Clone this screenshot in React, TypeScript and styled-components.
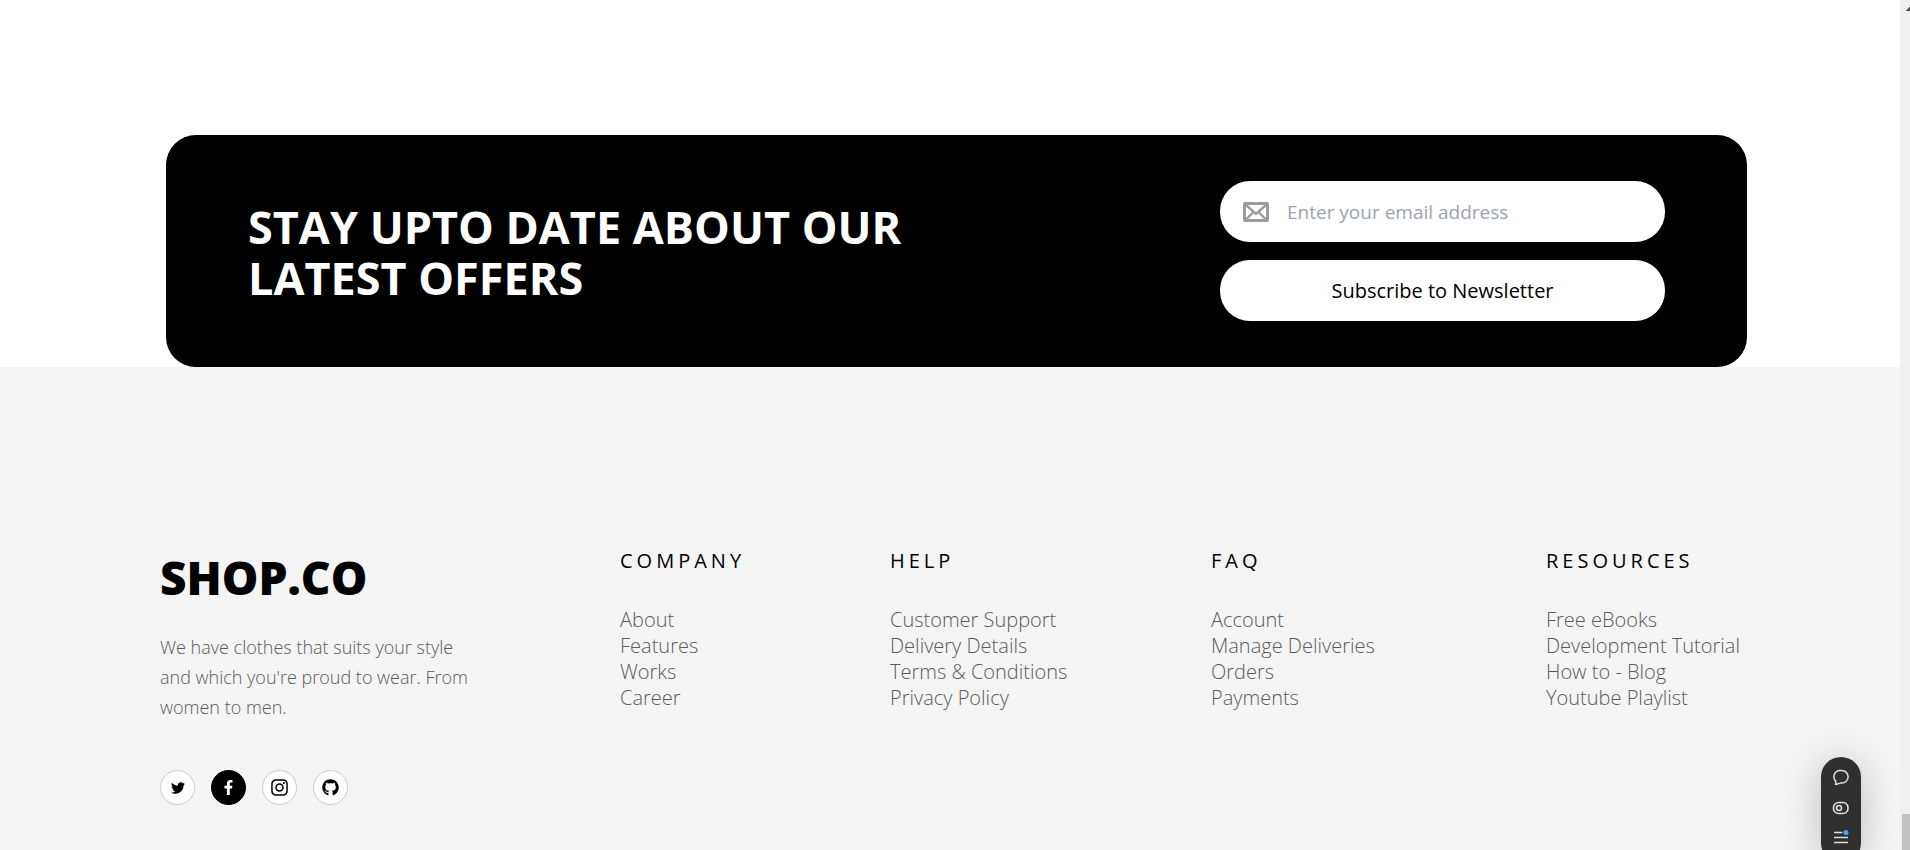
import React from "react";
import styled, { createGlobalStyle } from "styled-components";
import { FaFacebookF, FaGithub, FaInstagram, FaTwitter } from "react-icons/fa";

const GlobalStyle = createGlobalStyle`
  *, *::before, *::after { box-sizing: border-box; }
  body {
    margin: 0;
    background: #fff;
    color: #000;
    font-family: "Segoe UI", "Open Sans", "Noto Sans", sans-serif;
  }
  h1, h2, h3, p, ul { margin: 0; padding: 0; }
`;

const Page = styled.div`
  display: flex;
  min-height: 100vh;
`;

const Main = styled.div`
  flex: 1;
  min-width: 0;
  display: flex;
  flex-direction: column;
`;

const Newsletter = styled.section`
  display: flex;
  align-items: center;
  justify-content: space-between;
  gap: 48px;
  margin: 135px 153px 0 166px;
  padding: 46px 82px;
  border-radius: 30px;
  background: #000;
`;

const Headline = styled.h2`
  max-width: 700px;
  padding-top: 2px;
  color: #fff;
  font-size: 45px;
  font-weight: 700;
  line-height: 51px;
`;

const Form = styled.form`
  display: flex;
  flex-direction: column;
  gap: 18px;
  width: 445px;
`;

const EmailField = styled.label`
  display: flex;
  align-items: center;
  gap: 18px;
  height: 61px;
  padding: 0 23px;
  border-radius: 30px;
  background: #fff;
`;

const EmailInput = styled.input`
  flex: 1;
  min-width: 0;
  padding: 0;
  border: 0;
  outline: 0;
  background: transparent;
  font: inherit;
  font-size: 19px;
  &::placeholder { color: #9ca3af; opacity: 1; }
`;

const SubscribeButton = styled.button`
  height: 61px;
  border: 0;
  border-radius: 30px;
  background: #fff;
  color: #000;
  font: inherit;
  font-size: 20px;
  font-weight: 500;
  cursor: pointer;
`;

const Footer = styled.footer`
  flex: 1;
  display: grid;
  grid-template-columns: 460fr 270fr 321fr 335fr 204fr;
  align-items: start;
  padding: 179px 150px 44px 160px;
  background: #f4f4f4;
`;

const Brand = styled.div`
  padding-top: 3px;
`;

const Logo = styled.h1`
  font-size: 46px;
  font-weight: 800;
  line-height: 56px;
`;

const About = styled.p`
  max-width: 320px;
  margin-top: 27px;
  color: #5c5c5c;
  font-size: 18px;
  font-weight: 300;
  line-height: 30px;
`;

const Socials = styled.div`
  display: flex;
  gap: 16px;
  margin-top: 48px;
`;

const SocialLink = styled.a<{ $active?: boolean }>`
  display: flex;
  align-items: center;
  justify-content: center;
  width: 35px;
  height: 35px;
  border: 1px solid ${(p) => (p.$active ? "#000" : "#ccc")};
  border-radius: 50%;
  background: ${(p) => (p.$active ? "#000" : "#fff")};
  color: ${(p) => (p.$active ? "#fff" : "#000")};
`;

const ColumnTitle = styled.h3`
  font-size: 20px;
  font-weight: 500;
  line-height: 30px;
  letter-spacing: 4px;
`;

const LinkList = styled.ul`
  margin-top: 31px;
  list-style: none;
`;

const FooterLink = styled.a`
  display: block;
  color: #5c5c5c;
  font-size: 20px;
  font-weight: 300;
  line-height: 26px;
  text-decoration: none;
  white-space: nowrap;
`;

const ScrollTrack = styled.div`
  display: flex;
  flex-direction: column;
  justify-content: space-between;
  align-items: flex-end;
  width: 10px;
  padding-top: 7px;
  background: #f0f0f0;
`;

const ScrollThumb = styled.div`
  width: 8px;
  height: 36px;
  background: #c1c1c1;
`;

const Toolbar = styled.div`
  position: fixed;
  right: 49px;
  bottom: -13px;
  display: flex;
  flex-direction: column;
  align-items: center;
  gap: 14px;
  width: 40px;
  height: 106px;
  padding-top: 12px;
  border-radius: 20px;
  background: #303030;
  box-shadow: 0 4px 40px rgba(0, 0, 0, 0.22);
`;

const ToolButton = styled.button`
  display: flex;
  padding: 0;
  border: 0;
  background: transparent;
  color: #ddd;
`;

const columns = [
  { title: "COMPANY", links: ["About", "Features", "Works", "Career"] },
  { title: "HELP", links: ["Customer Support", "Delivery Details", "Terms & Conditions", "Privacy Policy"] },
  { title: "FAQ", links: ["Account", "Manage Deliveries", "Orders", "Payments"] },
  { title: "RESOURCES", links: ["Free eBooks", "Development Tutorial", "How to - Blog", "Youtube Playlist"] },
];

const socials = [
  { name: "Twitter", icon: <FaTwitter size={14} /> },
  { name: "Facebook", icon: <FaFacebookF size={15} />, active: true },
  { name: "Instagram", icon: <FaInstagram size={19} /> },
  { name: "GitHub", icon: <FaGithub size={17} /> },
];

export default function App() {
  return (
    <Page>
      <GlobalStyle />
      <Main>
        <Newsletter>
          <Headline>STAY UPTO DATE ABOUT OUR LATEST OFFERS</Headline>
          <Form onSubmit={(e) => e.preventDefault()}>
            <EmailField>
              <svg width="26" height="20" viewBox="0 0 26 20" fill="none" stroke="#9c9c9c" strokeWidth="3">
                <rect x="1.5" y="1.5" width="23" height="17" rx="0.5" />
                <path d="M3 3l10 9L23 3M3 17.500l7-7M23 17.500l-7-7" strokeWidth="2.400" />
              </svg>
              <EmailInput type="email" aria-label="Email address" placeholder="Enter your email address" />
            </EmailField>
            <SubscribeButton type="submit">Subscribe to Newsletter</SubscribeButton>
          </Form>
        </Newsletter>
        <Footer>
          <Brand>
            <Logo>SHOP.CO</Logo>
            <About>We have clothes that suits your style and which you're proud to wear. From women to men.</About>
            <Socials>
              {socials.map((s) => (
                <SocialLink key={s.name} href="#" aria-label={s.name} $active={s.active}>
                  {s.icon}
                </SocialLink>
              ))}
            </Socials>
          </Brand>
          {columns.map((c) => (
            <nav key={c.title} aria-label={c.title}>
              <ColumnTitle>{c.title}</ColumnTitle>
              <LinkList>
                {c.links.map((l) => (
                  <li key={l}>
                    <FooterLink href="#">{l}</FooterLink>
                  </li>
                ))}
              </LinkList>
            </nav>
          ))}
        </Footer>
      </Main>
      <ScrollTrack aria-hidden="true">
        <svg width="4" height="4" viewBox="0 0 4 4" fill="#505050" shapeRendering="crispEdges">
          <path d="M0 4V3H1V2H2V1H3V0H4V4Z" />
        </svg>
        <ScrollThumb />
      </ScrollTrack>
      <Toolbar>
        <ToolButton type="button" aria-label="Comments">
          <svg width="18" height="18" viewBox="0 0 18 18" fill="none" stroke="currentColor" strokeWidth="1.500" strokeLinejoin="round">
            <path d="M3.500 15.500L3.800 12.300A6.300 6.300 0 0 1 8 1.500h1.800a6.300 6.300 0 0 1 0 12.600H8.500z" />
          </svg>
        </ToolButton>
        <ToolButton type="button" aria-label="Toggle">
          <svg width="18" height="14" viewBox="0 0 18 14" fill="none" stroke="currentColor" strokeWidth="1.500">
            <rect x="1.500" y="1.500" width="14.500" height="11" rx="5" />
            <circle cx="7" cy="7" r="2.500" />
          </svg>
        </ToolButton>
        <ToolButton type="button" aria-label="Menu">
          <svg width="18" height="18" viewBox="0 0 18 18" fill="none" stroke="currentColor" strokeWidth="1.500">
            <path d="M2 3.500h8.500M2 8.500h14M2 13.500h14" />
            <circle cx="14" cy="3.500" r="2.500" fill="#4aa3ff" stroke="none" />
          </svg>
        </ToolButton>
      </Toolbar>
    </Page>
  );
}
